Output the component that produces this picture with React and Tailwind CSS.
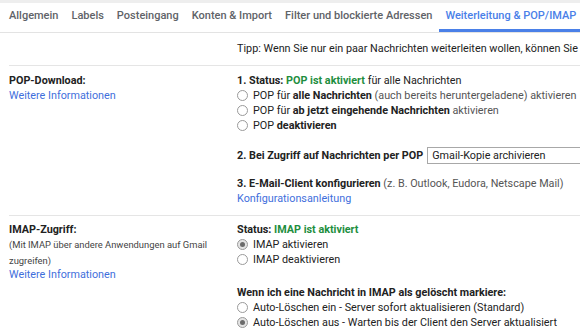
import React from "react";

const TABS = [
  "Allgemein",
  "Labels",
  "Posteingang",
  "Konten & Import",
  "Filter und blockierte Adressen",
  "Weiterleitung & POP/IMAP",
];

function Radio({ checked }) {
  return (
    <span
      className={`inline-flex items-center justify-center w-[11px] h-[11px] rounded-full border border-[#9a9a9a] shrink-0 mr-[5px] ${
        checked ? "bg-[#e4e4e4]" : "bg-white"
      }`}
    >
      {checked && <span className="w-[5px] h-[5px] rounded-full bg-[#6b6b6b]" />}
    </span>
  );
}

function Option({ checked, children }) {
  return (
    <div className="flex items-center h-[15px]">
      <Radio checked={checked} />
      <span>{children}</span>
    </div>
  );
}

export default function App() {
  return (
    <div
      className="w-[580px] h-[335px] overflow-hidden bg-white text-[10.8px] text-[#222]"
      style={{ fontFamily: "Roboto, 'Liberation Sans', sans-serif" }}
    >
      <div className="h-[3px] bg-[#eeeeee]" />

      {/* tabs */}
      <div className="flex h-[30px] pl-[2.5px] border-b border-[#e3e3e3] whitespace-nowrap">
        {TABS.map((t) => {
          const active = t === "Weiterleitung & POP/IMAP";
          return (
            <div
              key={t}
              className={`shrink-0 flex items-center pt-px px-[6.5px] text-[11px] font-medium border-b-[3px] ${
                active
                  ? "text-[#4a80e8] border-[#4a80e8]"
                  : "text-[#5f6368] border-transparent"
              }`}
            >
              {t}
            </div>
          );
        })}
      </div>

      {/* tip */}
      <div className="pl-[237px] h-[32px] flex items-center whitespace-nowrap">
        Tipp: Wenn Sie nur ein paar Nachrichten weiterleiten wollen, können Sie
        hierfür einen Filter erstellen.
      </div>

      {/* POP */}
      <div className="ml-[9px] border-t border-[#e5e5e5] pt-[7px] pb-[9px] flex">
        <div className="w-[228px] shrink-0 leading-[15px]">
          <div className="font-bold">POP-Download:</div>
          <div className="text-[#3f6fdc]">Weitere Informationen</div>
        </div>
        <div className="leading-[15px] whitespace-nowrap">
          <div className="font-bold">
            1. Status: <span className="text-[#1e8e3e]">POP ist aktiviert</span>{" "}
            <span className="font-normal">für alle Nachrichten</span>
          </div>
          <Option>
            POP für <b>alle Nachrichten</b>{" "}
            <span className="text-[#555]">(auch bereits heruntergeladene) aktivieren</span>
          </Option>
          <Option>
            POP für <b>ab jetzt eingehende Nachrichten</b>{" "}
            <span className="text-[#555]">aktivieren</span>
          </Option>
          <Option>
            POP <b>deaktivieren</b>
          </Option>

          <div className="flex items-center mt-[14px] h-[17px]">
            <b className="mr-[4px]">2. Bei Zugriff auf Nachrichten per POP</b>
            <div className="h-[17px] w-[200px] border border-[#a8a8a8] pl-[4px] flex items-center">
              Gmail-Kopie archivieren
            </div>
          </div>

          <div className="mt-[12px]">
            <b>3. E-Mail-Client konfigurieren</b>{" "}
            <span className="text-[#555]">(z. B. Outlook, Eudora, Netscape Mail)</span>
          </div>
          <div className="text-[#3f6fdc]">Konfigurationsanleitung</div>
        </div>
      </div>

      {/* IMAP */}
      <div className="ml-[9px] border-t border-[#e5e5e5] pt-[6px] flex">
        <div className="w-[228px] shrink-0 leading-[15px]">
          <div className="font-bold">IMAP-Zugriff:</div>
          <div className="text-[9.4px] leading-[16px] text-[#444] pr-[20px]">
            (Mit IMAP über andere Anwendungen auf Gmail zugreifen)
          </div>
          <div className="text-[#3f6fdc] mt-[-2px]">Weitere Informationen</div>
        </div>
        <div className="leading-[15px] whitespace-nowrap">
          <div className="font-bold">
            Status: <span className="text-[#1e8e3e]">IMAP ist aktiviert</span>
          </div>
          <Option checked>IMAP aktivieren</Option>
          <Option>IMAP deaktivieren</Option>

          <div className="font-bold mt-[18px]">
            Wenn ich eine Nachricht in IMAP als gelöscht markiere:
          </div>
          <Option>Auto-Löschen ein - Server sofort aktualisieren (Standard)</Option>
          <Option checked>Auto-Löschen aus - Warten bis der Client den Server aktualisiert</Option>
        </div>
      </div>
    </div>
  );
}
